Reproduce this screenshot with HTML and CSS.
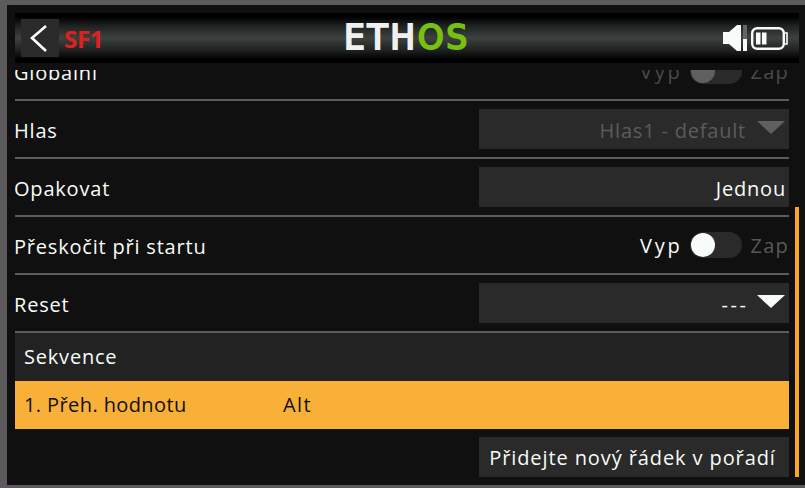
FILE: index.html
```html
<!DOCTYPE html>
<html lang="cs">
<head>
<meta charset="utf-8">
<title>ETHOS SF1</title>
<link rel="stylesheet" href="styles.css">
</head>
<body>
<main class="screen">
  <header class="topbar">
    <button class="back" aria-label="Zpět">
      <svg width="38" height="38" viewBox="0 0 38 38"><path d="M25 7 L11 19 L25 32" fill="none" stroke="#fff" stroke-width="2.6"/></svg>
    </button>
    <span class="sf">SF1</span>
    <div class="logo"><span class="eth">ETH</span><span class="os">OS</span></div>
    <div class="status">
      <svg width="24" height="26" viewBox="0 0 24 26"><path d="M0 7 L6 7 L14 0 L18 0 L18 26 L14 26 L6 19 L0 19 Z" fill="#f8fcf8"/><rect x="20" y="0" width="4" height="14" fill="#666"/><rect x="20" y="14" width="4" height="12" fill="#f8fcf8"/></svg>
      <svg width="37" height="26" viewBox="0 0 37 26"><rect x="1.2" y="3.2" width="31.6" height="20.6" rx="5" fill="none" stroke="#f8fcf8" stroke-width="2.4"/><path d="M33 8 H36 V19 H33" fill="none" stroke="#f8fcf8" stroke-width="1.6"/><rect x="5" y="7.5" width="4.5" height="12" fill="#f8fcf8"/><rect x="11" y="7.5" width="4.5" height="12" fill="#f8fcf8"/></svg>
    </div>
  </header>
  <div class="content">
    <div class="list">
      <div class="row">
        <span class="label">Globální</span>
        <div class="toggle dim"><span class="on">Vyp</span><i class="track"><b class="knob"></b></i><span class="off">Zap</span></div>
      </div>
      <div class="row">
        <span class="label">Hlas</span>
        <div class="field dim"><span>Hlas1 - default</span><i class="caret"></i></div>
      </div>
      <div class="row">
        <span class="label">Opakovat</span>
        <div class="field plain"><span>Jednou</span></div>
      </div>
      <div class="row">
        <span class="label">Přeskočit při startu</span>
        <div class="toggle"><span class="on">Vyp</span><i class="track"><b class="knob"></b></i><span class="off">Zap</span></div>
      </div>
      <div class="row">
        <span class="label">Reset</span>
        <div class="field"><span class="dashes">---</span><i class="caret"></i></div>
      </div>
      <section class="seq">
        <div class="seq-head"><span>Sekvence</span></div>
        <div class="seq-item"><span class="seq-name">1. Přeh. hodnotu</span><span class="seq-value">Alt</span></div>
        <div class="seq-foot"><button class="add">Přidejte nový řádek v pořadí</button></div>
      </section>
    </div>
    <div class="scrollbar"></div>
  </div>
</main>
</body>
</html>
```
FILE: styles.css
```css
* { box-sizing: border-box; }
html, body { margin: 0; height: 100%; }
body {
  width: 805px; height: 488px; overflow: hidden;
  background: #5c5a5c;
  padding: 5px 0 3px 7px;
  font-family: "Open Sans", "Noto Sans", sans-serif;
  font-size: 20px; letter-spacing: .8px; color: #f8fcf8; font-kerning: none;
}
.screen {
  position: relative; height: 480px; background: #101010;
  padding: 8px 6px 0 8px; display: flex; flex-direction: column; overflow: hidden;
}
.topbar {
  position: relative; flex: none; height: 50px; margin-bottom: 7px; display: flex; align-items: center;
  padding: 0 11px 0 6px;
  background: linear-gradient(#000 0, #000 4px, #1c1f1e 12px, #3d4240 25px, #1c1f1e 38px, #000 46px, #000 50px);
}
.back {
  width: 38px; height: 38px; padding: 0; border: 0; background: #2a2a2a; display: block;
}
.back svg { display: block; }
.sf { margin-left: 5px; color: #e02020; font-weight: 700; font-size: 24px; letter-spacing: -.3px; }
.logo {
  position: absolute; left: 329px; top: 5px;
  font-family: "DejaVu Sans", sans-serif; font-weight: 400; font-size: 33px; letter-spacing: 2.6px; line-height: 40px;
  display: flex; -webkit-text-stroke-width: 2px;
}
.eth { color: #f0f0f0; -webkit-text-stroke-color: #f0f0f0; }
.os { color: #78c010; -webkit-text-stroke-color: #78c010; }
.status { margin-left: auto; display: flex; align-items: center; gap: 4px; }
.status svg { display: block; }
.content { flex: 1; min-height: 0; overflow: hidden; position: relative; padding-right: 10px; }
.list { margin-top: -27px; }
.row {
  height: 58px; display: flex; align-items: center; justify-content: space-between;
  border-bottom: 2px solid #5c5c5c;
}
.label { padding-top: 2px; margin-left: -1px; }
.field {
  width: 310px; height: 40px; background: #2a2a2a; display: flex; align-items: center; justify-content: flex-end;
  padding: 0 4px; gap: 11px;
}
.field.plain { padding-right: 3px; }
.field span { padding-top: 2px; }
.field.dim { color: #5c5c5c; }
.dashes { letter-spacing: 2.6px; margin-right: -2.6px; }
.caret {
  width: 0; height: 0; border-left: 14px solid transparent; border-right: 14px solid transparent;
  border-top: 13px solid #f8fcf8; margin-bottom: 4px;
}
.field.dim .caret { border-top-color: #606060; }
.toggle { display: flex; align-items: center; gap: 8px; }
.toggle .on { letter-spacing: 2.8px; margin-right: -1px; }
.toggle .off { color: #585858; letter-spacing: 1.2px; }
.toggle.dim, .toggle.dim .off { color: #4a4a4a; }
.track { display: block; width: 52px; height: 26px; border-radius: 13px; background: #2a2a2a; padding: 1px; margin-right: 1px; }
.knob { display: block; width: 24px; height: 24px; border-radius: 50%; background: #f8fcf8; }
.toggle.dim .knob { background: #606060; }
.seq-head { height: 48px; background: #222; display: flex; align-items: center; padding: 0 0 2px 9px; }
.seq-item { height: 48px; background: #f8b038; color: #101010; display: flex; align-items: center; padding: 0 0 2px 9px; letter-spacing: .4px; }
.seq-name { width: 259px; }
.seq-value { letter-spacing: 1.4px; }
.seq-foot { display: flex; justify-content: flex-end; padding-top: 8px; }
.add {
  width: 310px; height: 40px; border: 0; background: #2a2a2a; color: #f8fcf8; font: inherit; letter-spacing: .9px; font-kerning: none;
  padding: 0 3px 0 0; text-align: center;
}
.scrollbar { position: absolute; right: 0; top: 137px; bottom: 8px; width: 4px; background: #f8a820; }
```
